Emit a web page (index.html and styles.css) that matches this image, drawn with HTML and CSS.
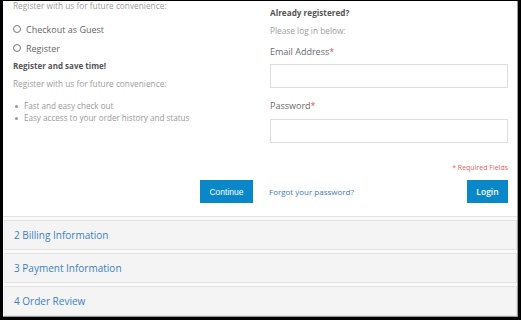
FILE: index.html
```html
<!DOCTYPE html>
<html>
<head>
<meta charset="utf-8">
<link rel="stylesheet" href="styles.css">
</head>
<body>
<div class="frame">
  <div class="main">
    <div class="col-left">
      <p class="muted first">Register with us for future convenience:</p>
      <label class="radio first-radio"><span class="circle"></span>Checkout as Guest</label>
      <label class="radio"><span class="circle"></span>Register</label>
      <p class="strong mt5">Register and save time!</p>
      <p class="muted mt6">Register with us for future convenience:</p>
      <ul class="bullets">
        <li>Fast and easy check out</li>
        <li>Easy access to your order history and status</li>
      </ul>
    </div>
    <div class="col-right">
      <p class="strong r-head">Already registered?</p>
      <p class="muted mt6">Please log in below:</p>
      <p class="label mt8">Email Address<span class="req">*</span></p>
      <div class="input mt5"></div>
      <p class="label mt11">Password<span class="req">*</span></p>
      <div class="input mt6"></div>
      <p class="required">* Required Fields</p>
    </div>
    <div class="act-left">
      <button class="btn btn-continue">Continue</button>
    </div>
    <div class="act-right">
      <a class="forgot">Forgot your password?</a>
      <button class="btn btn-login">Login</button>
    </div>
  </div>
  <div class="steps">
    <div class="step">2 Billing Information</div>
    <div class="step">3 Payment Information</div>
    <div class="step">4 Order Review</div>
  </div>
</div>
</body>
</html>
```

FILE: styles.css
```css
* { box-sizing: border-box; }
html, body { margin: 0; padding: 0; }
body {
  background: #000;
  width: 521px;
  height: 320px;
  overflow: hidden;
  font-family: "Open Sans", "DejaVu Sans", sans-serif;
}
.frame {
  margin: 1px 0 0 3px;
  width: 515px;
  height: 316px;
  background: #fafafa;
  border-right: 1px solid #9a9a9a;
  border-bottom: 1px solid #9a9a9a;
  overflow: hidden;
}
p { margin: 0; }
.main {
  background: #fff;
  height: 216px;
  border-bottom: 1px solid #e4e4e4;
  display: grid;
  grid-template-columns: 257px 1fr;
  grid-template-rows: auto auto;
  align-content: start;
  padding: 0 9px 0 10px;
}
.muted {
  font-size: 8.3px;
  line-height: 12px;
  color: #9c9c9c;
}
.first { margin-top: -1px; }
.strong {
  font-size: 8px;
  line-height: 12px;
  font-weight: 700;
  color: #555;
}
.r-head { margin-top: 6px; font-size: 8.2px; }
.mt5 { margin-top: 5px; }
.mt6 { margin-top: 6px; }
.mt8 { margin-top: 8px; }
.mt11 { margin-top: 11px; }
.radio {
  display: flex;
  align-items: center;
  height: 14px;
  font-size: 9px;
  color: #666;
  margin-top: 5px;
}
.first-radio { margin-top: 10px; }
.circle {
  width: 8px;
  height: 8px;
  border: 1px solid #777;
  border-radius: 50%;
  margin-right: 5px;
  flex: none;
}
.bullets {
  list-style: none;
  margin: 10px 0 0;
  padding: 0;
}
.bullets li {
  font-size: 8.1px;
  line-height: 12px;
  color: #999;
  position: relative;
  padding-left: 11px;
}
.bullets li::before {
  content: "";
  position: absolute;
  left: 2px;
  top: 5px;
  width: 3px;
  height: 3px;
  border-radius: 50%;
  background: #999;
}
.label {
  font-size: 9px;
  line-height: 14px;
  color: #6a6a6a;
}
.req { color: #e05555; }
.input {
  height: 24px;
  border: 1px solid #ddd;
  background: #fff;
}
.required {
  margin-top: 20px;
  text-align: right;
  font-size: 7px;
  line-height: 10px;
  color: #e86060;
}
.act-left {
  padding-top: 7px;
  display: flex;
  justify-content: flex-end;
  padding-right: 17px;
}
.act-right {
  padding-top: 7px;
  display: flex;
  align-items: center;
  justify-content: space-between;
}
.btn {
  border: 0;
  background: #0a87c9;
  color: #fff;
  height: 23px;
  padding: 0;
  margin: 0;
}
.btn-continue {
  width: 53px;
  font-family: "Liberation Sans", Arial, sans-serif;
  font-size: 8.5px;
}
.btn-login {
  width: 41px;
  font-family: "Open Sans", sans-serif;
  font-weight: 600;
  font-size: 8.5px;
}
.forgot {
  font-size: 8px;
  color: #3f7db5;
  margin-left: -1px;
}
.steps {
  padding-top: 3px;
}
.step {
  height: 30px;
  margin-bottom: 3px;
  background: #f4f4f4;
  border: 1px solid #e2e2e2;
  border-left-color: #ececec;
  margin-left: 1px;
  padding-left: 9px;
  display: flex;
  align-items: center;
  font-size: 10px;
  color: #3c80bf;
}
```
